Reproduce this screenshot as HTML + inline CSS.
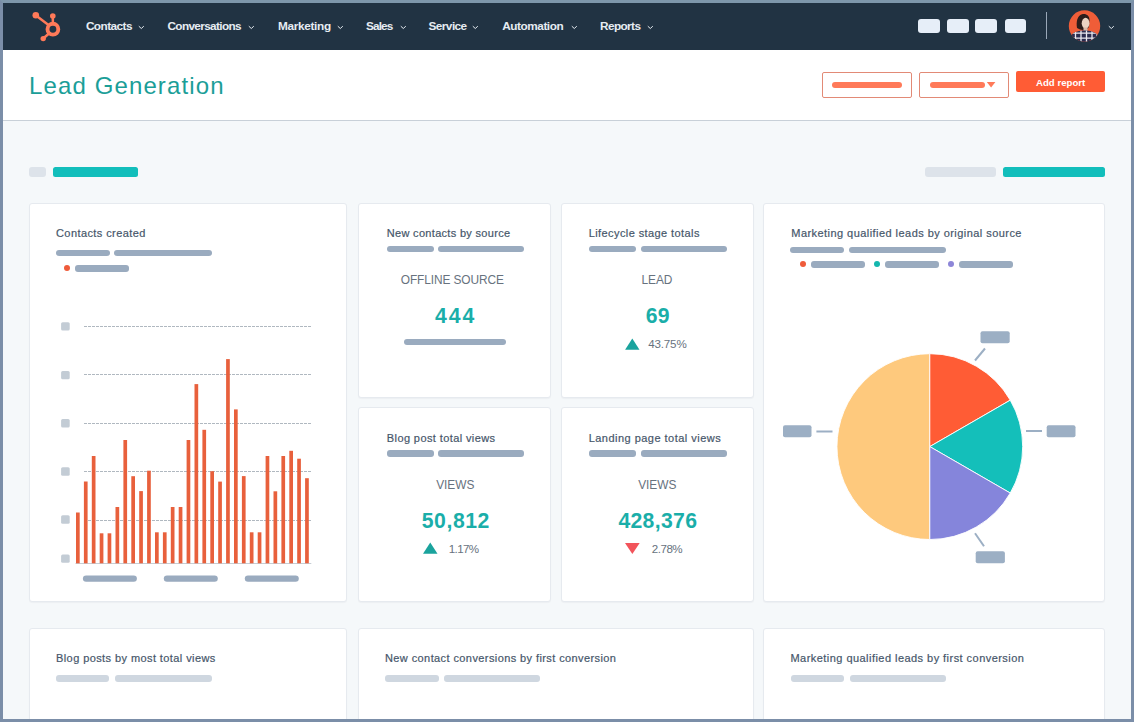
<!DOCTYPE html>
<html><head><meta charset="utf-8"><title>Lead Generation</title>
<style>
html,body{margin:0;padding:0;}
body{width:1134px;height:722px;overflow:hidden;position:relative;background:#f5f8fa;font-family:"Liberation Sans",sans-serif;}
.abs,.t,.r,.card,.nav,.hdr,.frame{position:absolute;}
.t{white-space:nowrap;line-height:1;}
.tt{-webkit-text-stroke:0.25px currentColor;}
.nav{left:0;top:0;width:1134px;height:49.5px;background:#213343;}
.hdr{left:0;top:49.5px;width:1134px;height:70px;background:#fff;border-bottom:1px solid #c8d0d8;}
.card{background:#fff;border:1px solid #e6eaef;border-radius:3px;box-sizing:border-box;box-shadow:0 1px 1px rgba(45,62,80,0.04);}
.frame{left:0;top:0;width:1134px;height:722px;box-sizing:border-box;border:3px solid #7b8ea8;border-top-color:#7e97ab;pointer-events:none;}
</style></head><body>
<div class="nav"></div><svg class="abs" style="left:30px;top:8px" width="40" height="38" viewBox="30 8 40 38">
<g stroke="#ff7a59" fill="none" stroke-width="2.5" stroke-linecap="round">
<circle cx="52.9" cy="29.2" r="5.4" stroke-width="3.9"/>
<line x1="36" y1="15.5" x2="48.5" y2="25"/>
<line x1="52.8" y1="17" x2="52.9" y2="23.5"/>
<line x1="43.5" y1="38.2" x2="49.5" y2="33"/>
</g>
<g fill="#ff7a59"><circle cx="35.8" cy="15.2" r="3.3"/><circle cx="52.8" cy="16" r="2.8"/><circle cx="43.2" cy="38.6" r="2.7"/></g>
</svg><div class="t" style="left:85.90px;top:21.00px;font-size:11.8px;color:#e6ecf2;font-weight:700;letter-spacing:-0.543px;">Contacts</div><svg class="abs" style="left:137.9px;top:24.5px" width="7" height="5" viewBox="0 0 7 5"><path d="M0.8 1.2 L3.3 3.5 L5.8 1.2" stroke="#e6ecf2" stroke-width="1" fill="none"/></svg><div class="t" style="left:167.50px;top:21.00px;font-size:11.8px;color:#e6ecf2;font-weight:700;letter-spacing:-0.658px;">Conversations</div><svg class="abs" style="left:248.3px;top:24.5px" width="7" height="5" viewBox="0 0 7 5"><path d="M0.8 1.2 L3.3 3.5 L5.8 1.2" stroke="#e6ecf2" stroke-width="1" fill="none"/></svg><div class="t" style="left:277.90px;top:21.00px;font-size:11.8px;color:#e6ecf2;font-weight:700;letter-spacing:-0.300px;">Marketing</div><svg class="abs" style="left:336.5px;top:24.5px" width="7" height="5" viewBox="0 0 7 5"><path d="M0.8 1.2 L3.3 3.5 L5.8 1.2" stroke="#e6ecf2" stroke-width="1" fill="none"/></svg><div class="t" style="left:366.10px;top:21.00px;font-size:11.8px;color:#e6ecf2;font-weight:700;letter-spacing:-0.900px;">Sales</div><svg class="abs" style="left:400.0px;top:24.5px" width="7" height="5" viewBox="0 0 7 5"><path d="M0.8 1.2 L3.3 3.5 L5.8 1.2" stroke="#e6ecf2" stroke-width="1" fill="none"/></svg><div class="t" style="left:428.50px;top:21.00px;font-size:11.8px;color:#e6ecf2;font-weight:700;letter-spacing:-0.550px;">Service</div><svg class="abs" style="left:472.4px;top:24.5px" width="7" height="5" viewBox="0 0 7 5"><path d="M0.8 1.2 L3.3 3.5 L5.8 1.2" stroke="#e6ecf2" stroke-width="1" fill="none"/></svg><div class="t" style="left:502.30px;top:21.00px;font-size:11.8px;color:#e6ecf2;font-weight:700;letter-spacing:-0.467px;">Automation</div><svg class="abs" style="left:570.7px;top:24.5px" width="7" height="5" viewBox="0 0 7 5"><path d="M0.8 1.2 L3.3 3.5 L5.8 1.2" stroke="#e6ecf2" stroke-width="1" fill="none"/></svg><div class="t" style="left:600.00px;top:21.00px;font-size:11.8px;color:#e6ecf2;font-weight:700;letter-spacing:-0.600px;">Reports</div><svg class="abs" style="left:646.7px;top:24.5px" width="7" height="5" viewBox="0 0 7 5"><path d="M0.8 1.2 L3.3 3.5 L5.8 1.2" stroke="#e6ecf2" stroke-width="1" fill="none"/></svg><div class="r" style="left:918.2px;top:19.2px;width:21.50px;height:13.70px;background:#e6eef8;border-radius:3px;"></div><div class="r" style="left:947.3px;top:19.2px;width:21.50px;height:13.70px;background:#e6eef8;border-radius:3px;"></div><div class="r" style="left:975.1px;top:19.2px;width:21.50px;height:13.70px;background:#e6eef8;border-radius:3px;"></div><div class="r" style="left:1004.6px;top:19.2px;width:21.50px;height:13.70px;background:#e6eef8;border-radius:3px;"></div><div class="r" style="left:1046px;top:12px;width:1.20px;height:27.00px;background:#9aa8b8;border-radius:0px;"></div><svg class="abs" style="left:1066px;top:8px" width="38" height="38" viewBox="0 0 38 38">
<defs><clipPath id="av"><circle cx="18.5" cy="18" r="15.7"/></clipPath><clipPath id="sh"><path d="M3 38 L5.5 27 C9 23.5 13 22.5 18.5 22.5 C24 22.5 28 23.5 31.5 27 L34 38 Z"/></clipPath></defs>
<circle cx="18.5" cy="18" r="15.7" fill="#ef5d38"/>
<g clip-path="url(#av)">
<path d="M11 20 C10 14 11 8 16 6.2 C20 5.2 23.5 7.5 23.5 12 L23 19 C21 22 17 22.5 14 21.5 Z" fill="#2d1d1b"/>
<ellipse cx="19.6" cy="15.2" rx="3.9" ry="5.4" fill="#ecd3c3"/>
<rect x="17.5" y="19.5" width="4" height="4" fill="#d9b9a8"/>
<path d="M3 38 L5.5 27 C9 23.5 13 22.5 18.5 22.5 C24 22.5 28 23.5 31.5 27 L34 38 Z" fill="#2b2c4e"/>
<g stroke="#e9e8f0" stroke-width="1.3" fill="none" clip-path="url(#sh)">
<path d="M4 25.2 H34 M4 30.2 H34 M4 35 H34"/>
<path d="M9.5 22 V38 M15 22 V38 M20.5 22 V38 M26 22 V38 M31 22 V38"/>
</g>
</g></svg><svg class="abs" style="left:1108px;top:25px" width="7" height="5" viewBox="0 0 7 5"><path d="M0.8 1.2 L3.3 3.5 L5.8 1.2" stroke="#e6ecf2" stroke-width="1" fill="none"/></svg><div class="hdr"></div><div class="t" style="left:29.00px;top:73.60px;font-size:24.0px;color:#1b9e98;font-weight:400;letter-spacing:1.121px;">Lead Generation</div><div class="abs" style="left:821.5px;top:72px;width:90.4px;height:25.9px;box-sizing:border-box;border:1.3px solid #e28a76;border-radius:2px;background:#fff"></div><div class="r" style="left:832px;top:81.5px;width:69.70px;height:6.70px;background:#ff7a59;border-radius:3.5px;"></div><div class="abs" style="left:919.3px;top:72px;width:90px;height:25.9px;box-sizing:border-box;border:1.3px solid #e28a76;border-radius:2px;background:#fff"></div><div class="r" style="left:929.6px;top:81.5px;width:55.40px;height:6.70px;background:#ff7a59;border-radius:3.5px;"></div><svg class="abs" style="left:986px;top:81px" width="10" height="7" viewBox="0 0 10 7"><path d="M0.8 1 L9.4 1 L5.1 6.4 Z" fill="#ff7a59"/></svg><div class="r" style="left:1016.4px;top:71.4px;width:88.40px;height:21.10px;background:#ff5c35;border-radius:2px;"></div><div class="t" style="left:1036.00px;top:78.40px;font-size:9.6px;color:#ffffff;font-weight:700;letter-spacing:0.022px;">Add report</div><div class="r" style="left:29.2px;top:167px;width:16.60px;height:9.80px;background:#dde3ea;border-radius:3px;"></div><div class="r" style="left:53px;top:167px;width:85.10px;height:9.80px;background:#12bebb;border-radius:2.5px;"></div><div class="r" style="left:925.2px;top:167px;width:70.80px;height:9.80px;background:#dde3ea;border-radius:3px;"></div><div class="r" style="left:1002.6px;top:167px;width:102.30px;height:9.80px;background:#12bebb;border-radius:2.5px;"></div><div class="card" style="left:29px;top:203px;width:318px;height:399px;"></div><div class="card" style="left:358px;top:203px;width:193px;height:195px;"></div><div class="card" style="left:561px;top:203px;width:193px;height:195px;"></div><div class="card" style="left:358px;top:407px;width:193px;height:195px;"></div><div class="card" style="left:561px;top:407px;width:193px;height:195px;"></div><div class="card" style="left:763px;top:203px;width:342px;height:399px;"></div><div class="card" style="left:29px;top:628px;width:318px;height:112px;"></div><div class="card" style="left:358px;top:628px;width:396px;height:112px;"></div><div class="card" style="left:763px;top:628px;width:342px;height:112px;"></div><div class="t" style="left:56.00px;top:228.00px;font-size:11.0px;color:#46566a;font-weight:400;letter-spacing:0.413px;-webkit-text-stroke:0.2px #46566a;">Contacts created</div><div class="r" style="left:56px;top:250.2px;width:53.70px;height:6.30px;background:#9aabbf;border-radius:3px;"></div><div class="r" style="left:114.2px;top:250.2px;width:97.40px;height:6.30px;background:#9aabbf;border-radius:3px;"></div><div class="abs" style="left:63.9px;top:265.3px;width:6px;height:6px;border-radius:50%;background:#ef5b3a"></div><div class="r" style="left:74.7px;top:265px;width:54.00px;height:6.70px;background:#9aabbf;border-radius:3px;"></div><svg class="abs" style="left:0;top:0" width="1134" height="722" viewBox="0 0 1134 722"><line x1="84" y1="326.5" x2="311.3" y2="326.5" stroke="#b0b8c0" stroke-width="1" stroke-dasharray="3 1"/><line x1="84" y1="374.5" x2="311.3" y2="374.5" stroke="#b0b8c0" stroke-width="1" stroke-dasharray="3 1"/><line x1="84" y1="423.5" x2="311.3" y2="423.5" stroke="#b0b8c0" stroke-width="1" stroke-dasharray="3 1"/><line x1="84" y1="471.5" x2="311.3" y2="471.5" stroke="#b0b8c0" stroke-width="1" stroke-dasharray="3 1"/><line x1="84" y1="520.5" x2="311.3" y2="520.5" stroke="#b0b8c0" stroke-width="1" stroke-dasharray="3 1"/><line x1="75.5" y1="563.5" x2="311.3" y2="563.5" stroke="#c6cdd4" stroke-width="1"/><g fill="#e8603c"><rect x="76.00" y="512.5" width="3.7" height="50.8"/><rect x="83.90" y="481.5" width="3.7" height="81.8"/><rect x="91.80" y="456.0" width="3.7" height="107.3"/><rect x="99.70" y="533.3" width="3.7" height="30.0"/><rect x="107.60" y="533.3" width="3.7" height="30.0"/><rect x="115.50" y="507.0" width="3.7" height="56.3"/><rect x="123.40" y="440.0" width="3.7" height="123.3"/><rect x="131.30" y="476.2" width="3.7" height="87.1"/><rect x="139.20" y="491.1" width="3.7" height="72.2"/><rect x="147.10" y="470.7" width="3.7" height="92.6"/><rect x="155.00" y="532.3" width="3.7" height="31.0"/><rect x="162.90" y="532.3" width="3.7" height="31.0"/><rect x="170.80" y="507.0" width="3.7" height="56.3"/><rect x="178.70" y="507.0" width="3.7" height="56.3"/><rect x="186.60" y="440.0" width="3.7" height="123.3"/><rect x="194.50" y="384.1" width="3.7" height="179.2"/><rect x="202.40" y="429.8" width="3.7" height="133.5"/><rect x="210.30" y="471.2" width="3.7" height="92.1"/><rect x="218.20" y="481.6" width="3.7" height="81.7"/><rect x="226.10" y="359.1" width="3.7" height="204.2"/><rect x="234.00" y="409.4" width="3.7" height="153.9"/><rect x="241.90" y="476.1" width="3.7" height="87.2"/><rect x="249.80" y="532.3" width="3.7" height="31.0"/><rect x="257.70" y="532.3" width="3.7" height="31.0"/><rect x="265.60" y="456.0" width="3.7" height="107.3"/><rect x="273.50" y="491.3" width="3.7" height="72.0"/><rect x="281.40" y="456.0" width="3.7" height="107.3"/><rect x="289.30" y="450.8" width="3.7" height="112.5"/><rect x="297.20" y="458.7" width="3.7" height="104.6"/><rect x="305.10" y="478.2" width="3.7" height="85.1"/></g><rect x="61.1" y="322.2" width="8.6" height="8.4" rx="1.5" fill="#c3ccd5"/><rect x="61.1" y="370.9" width="8.6" height="8.4" rx="1.5" fill="#c3ccd5"/><rect x="61.1" y="419.1" width="8.6" height="8.4" rx="1.5" fill="#c3ccd5"/><rect x="61.1" y="467.3" width="8.6" height="8.4" rx="1.5" fill="#c3ccd5"/><rect x="61.1" y="515.3" width="8.6" height="8.4" rx="1.5" fill="#c3ccd5"/><rect x="61.1" y="554.4" width="8.6" height="8.4" rx="1.5" fill="#c3ccd5"/><rect x="82.9" y="575.4" width="54" height="6.4" rx="3.2" fill="#9aabbf"/><rect x="163.8" y="575.4" width="54" height="6.4" rx="3.2" fill="#9aabbf"/><rect x="244.8" y="575.4" width="54" height="6.4" rx="3.2" fill="#9aabbf"/></svg><div class="t" style="left:386.80px;top:228.00px;font-size:11.0px;color:#46566a;font-weight:400;letter-spacing:0.310px;-webkit-text-stroke:0.2px #46566a;">New contacts by source</div><div class="r" style="left:386.8px;top:246.2px;width:46.90px;height:6.20px;background:#9aabbf;border-radius:3px;"></div><div class="r" style="left:438.2px;top:246.2px;width:86.30px;height:6.20px;background:#9aabbf;border-radius:3px;"></div><div class="t" style="left:400.80px;top:275.40px;font-size:11.9px;color:#67727e;font-weight:400;letter-spacing:-0.100px;">OFFLINE SOURCE</div><div class="t" style="left:434.90px;top:305.10px;font-size:21.2px;color:#1aaea9;font-weight:700;letter-spacing:2.050px;">444</div><div class="r" style="left:403.7px;top:339.3px;width:102.30px;height:6.20px;background:#9aabbf;border-radius:3px;"></div><div class="t" style="left:588.70px;top:228.00px;font-size:11.0px;color:#46566a;font-weight:400;letter-spacing:0.410px;-webkit-text-stroke:0.2px #46566a;">Lifecycle stage totals</div><div class="r" style="left:588.7px;top:246.2px;width:47.20px;height:6.20px;background:#9aabbf;border-radius:3px;"></div><div class="r" style="left:640.7px;top:246.2px;width:86.10px;height:6.20px;background:#9aabbf;border-radius:3px;"></div><div class="t" style="left:641.50px;top:275.20px;font-size:11.9px;color:#67727e;font-weight:400;letter-spacing:-0.067px;">LEAD</div><div class="t" style="left:645.70px;top:304.90px;font-size:21.2px;color:#1aaea9;font-weight:700;letter-spacing:0.300px;">69</div><svg class="abs" style="left:624px;top:337px" width="18" height="14" viewBox="0 0 18 14"><path d="M1.1 12.8 L15.5 12.8 L8.3 1.4 Z" fill="#1aa39d"/></svg><div class="t" style="left:648.20px;top:338.30px;font-size:11.6px;color:#67727e;font-weight:400;letter-spacing:-0.160px;">43.75%</div><div class="t" style="left:386.80px;top:432.50px;font-size:11.0px;color:#46566a;font-weight:400;letter-spacing:0.400px;-webkit-text-stroke:0.2px #46566a;">Blog post total views</div><div class="r" style="left:386.8px;top:450.2px;width:46.90px;height:6.40px;background:#9aabbf;border-radius:3px;"></div><div class="r" style="left:438.2px;top:450.2px;width:86.30px;height:6.40px;background:#9aabbf;border-radius:3px;"></div><div class="t" style="left:436.20px;top:480.30px;font-size:11.9px;color:#67727e;font-weight:400;letter-spacing:-0.050px;">VIEWS</div><div class="t" style="left:421.70px;top:510.20px;font-size:21.2px;color:#1aaea9;font-weight:700;letter-spacing:0.580px;">50,812</div><svg class="abs" style="left:421.7px;top:541.3px" width="18" height="14" viewBox="0 0 18 14"><path d="M1 12.7 L15.5 12.7 L8.25 1.4 Z" fill="#1aa39d"/></svg><div class="t" style="left:448.80px;top:542.70px;font-size:11.6px;color:#67727e;font-weight:400;letter-spacing:-0.625px;">1.17%</div><div class="t" style="left:588.70px;top:432.50px;font-size:11.0px;color:#46566a;font-weight:400;letter-spacing:0.474px;-webkit-text-stroke:0.2px #46566a;">Landing page total views</div><div class="r" style="left:588.7px;top:450.2px;width:47.20px;height:6.40px;background:#9aabbf;border-radius:3px;"></div><div class="r" style="left:640.7px;top:450.2px;width:86.10px;height:6.40px;background:#9aabbf;border-radius:3px;"></div><div class="t" style="left:638.20px;top:480.30px;font-size:11.9px;color:#67727e;font-weight:400;letter-spacing:-0.050px;">VIEWS</div><div class="t" style="left:618.40px;top:510.20px;font-size:21.2px;color:#1aaea9;font-weight:700;letter-spacing:0.333px;">428,376</div><svg class="abs" style="left:624px;top:541.5px" width="18" height="13" viewBox="0 0 18 13"><path d="M1 1 L15.7 1 L8.35 12 Z" fill="#f2545b"/></svg><div class="t" style="left:651.80px;top:542.70px;font-size:11.6px;color:#67727e;font-weight:400;letter-spacing:-0.500px;">2.78%</div><div class="t" style="left:791.30px;top:227.50px;font-size:11.0px;color:#46566a;font-weight:400;letter-spacing:0.447px;-webkit-text-stroke:0.2px #46566a;">Marketing qualified leads by original source</div><div class="r" style="left:790.3px;top:246.8px;width:54.10px;height:6.20px;background:#9aabbf;border-radius:3px;"></div><div class="r" style="left:849px;top:246.8px;width:97.30px;height:6.20px;background:#9aabbf;border-radius:3px;"></div><div class="abs" style="left:799.9px;top:261.3px;width:6px;height:6px;border-radius:50%;background:#ef5b3a"></div><div class="r" style="left:811.1px;top:261px;width:53.80px;height:6.60px;background:#9aabbf;border-radius:3px;"></div><div class="abs" style="left:874.1px;top:261.3px;width:6px;height:6px;border-radius:50%;background:#14b7ae"></div><div class="r" style="left:885.3px;top:261px;width:53.80px;height:6.60px;background:#9aabbf;border-radius:3px;"></div><div class="abs" style="left:948.3px;top:261.3px;width:6px;height:6px;border-radius:50%;background:#8d86d8"></div><div class="r" style="left:959.2px;top:261px;width:53.80px;height:6.60px;background:#9aabbf;border-radius:3px;"></div><svg class="abs" style="left:0;top:0" width="1134" height="722" viewBox="0 0 1134 722"><path d="M929.8 446.6 L929.80 539.50 A92.9 92.9 0 0 1 929.80 353.70 Z" fill="#fec97d" stroke="#fff" stroke-width="0.9" stroke-linejoin="round"/><path d="M929.8 446.6 L929.80 353.70 A92.9 92.9 0 0 1 1010.25 400.15 Z" fill="#ff5c35" stroke="#fff" stroke-width="0.9" stroke-linejoin="round"/><path d="M929.8 446.6 L1010.25 400.15 A92.9 92.9 0 0 1 1010.25 493.05 Z" fill="#14bfba" stroke="#fff" stroke-width="0.9" stroke-linejoin="round"/><path d="M929.8 446.6 L1010.25 493.05 A92.9 92.9 0 0 1 929.80 539.50 Z" fill="#8585db" stroke="#fff" stroke-width="0.9" stroke-linejoin="round"/><rect x="980.5" y="331.3" width="29.2" height="12" rx="2" fill="#9cafc4"/><line x1="985" y1="348.5" x2="975" y2="360.5" stroke="#9cafc4" stroke-width="2"/><rect x="1046.7" y="425.2" width="28.8" height="12" rx="2" fill="#9cafc4"/><line x1="1026" y1="431" x2="1042" y2="431" stroke="#9cafc4" stroke-width="2"/><rect x="783" y="425.2" width="28.5" height="12" rx="2" fill="#9cafc4"/><line x1="816.4" y1="431.5" x2="832.5" y2="431.5" stroke="#9cafc4" stroke-width="2"/><rect x="975.7" y="551.2" width="29.2" height="12" rx="2" fill="#9cafc4"/><line x1="975" y1="533.3" x2="984" y2="546.3" stroke="#9cafc4" stroke-width="2"/></svg><div class="t" style="left:56.00px;top:652.80px;font-size:11.0px;color:#46566a;font-weight:400;letter-spacing:0.414px;-webkit-text-stroke:0.2px #46566a;">Blog posts by most total views</div><div class="r" style="left:56px;top:675px;width:53.00px;height:6.50px;background:#cfd7e0;border-radius:3px;"></div><div class="r" style="left:114.5px;top:675px;width:97.00px;height:6.50px;background:#cfd7e0;border-radius:3px;"></div><div class="t" style="left:385.00px;top:652.80px;font-size:11.0px;color:#46566a;font-weight:400;letter-spacing:0.405px;-webkit-text-stroke:0.2px #46566a;">New contact conversions by first conversion</div><div class="r" style="left:385px;top:675px;width:53.50px;height:6.50px;background:#cfd7e0;border-radius:3px;"></div><div class="r" style="left:444px;top:675px;width:96.00px;height:6.50px;background:#cfd7e0;border-radius:3px;"></div><div class="t" style="left:790.50px;top:652.80px;font-size:11.0px;color:#46566a;font-weight:400;letter-spacing:0.455px;-webkit-text-stroke:0.2px #46566a;">Marketing qualified leads by first conversion</div><div class="r" style="left:790.5px;top:675px;width:53.00px;height:6.50px;background:#cfd7e0;border-radius:3px;"></div><div class="r" style="left:849.5px;top:675px;width:96.00px;height:6.50px;background:#cfd7e0;border-radius:3px;"></div><div class="frame"></div>
</body></html>
